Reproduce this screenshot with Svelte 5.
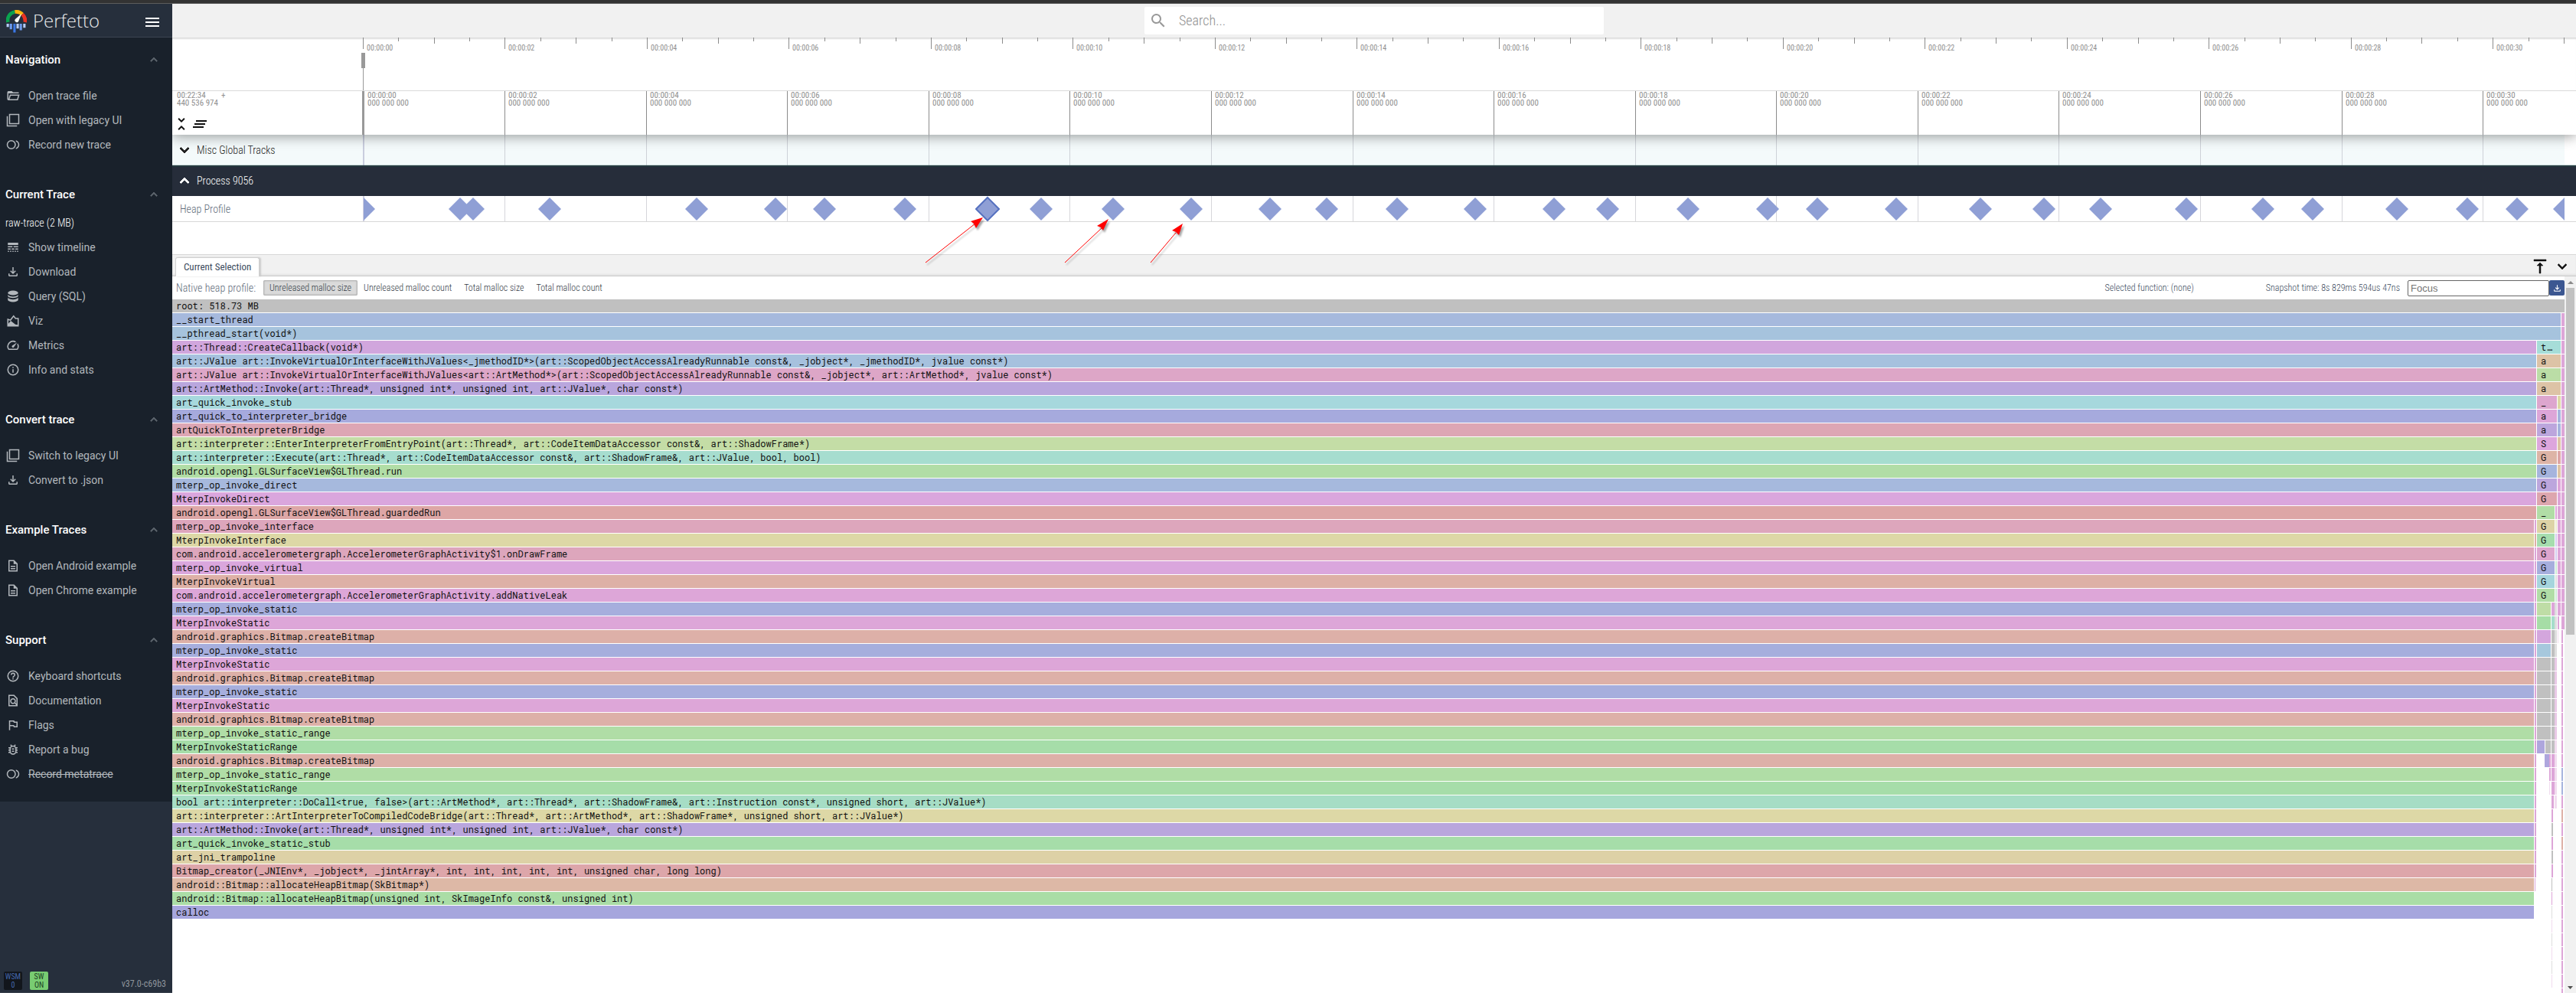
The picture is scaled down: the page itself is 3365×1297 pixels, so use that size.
<script>
  const icons = {
    folder: 'M4 20q-.825 0-1.412-.587T2 18V6q0-.825.588-1.412T4 4h6l2 2h10v2H4v10l2.4-8h17.1L20.5 20H4Zm2.1-2H19l1.8-6H7.9l-1.8 6Z',
    copies: 'M3 5H1v18h18v-2H3V5zM23 1H5v18h18V1zm-2 16H7V3h14v14z',
    record: 'M17 4.3v2.1c2.3.8 4 3 4 5.6s-1.7 4.800-4 5.600v2.100c3.400-.9 6-4 6-7.700s-2.600-6.800-6-7.700zM9 4a8 8 0 1 0 0 16a8 8 0 0 0 0-16zm0 14a6 6 0 1 1 0-12a6 6 0 0 1 0 12z',
    lines: 'M3 16h5v-2H3v2zm6.500 0h5v-2h-5v2zm6.500 0h5v-2h-5v2zM3 20h2v-2H3v2zm4 0h2v-2H7v2zm4 0h2v-2h-2v2zm4 0h2v-2h-2v2zm4 0h2v-2h-2v2zM3 12h8v-2H3v2zm10 0h8v-2h-8v2zM3 4v4h18V4H3z',
    download: 'M18 15v3H6v-3H4v3c0 1.100.9 2 2 2h12c1.100 0 2-.9 2-2v-3h-2zm-1-4-1.410-1.410L13 12.170V4h-2v8.170L8.410 9.590 7 11l5 5 5-5z',
    database: 'M12 10q3.750 0 6.375-1.175T21 6q0-1.650-2.625-2.825T12 2Q8.250 2 5.625 3.175T3 6q0 1.650 2.625 2.825T12 10Zm0 5q1.025 0 2.563-.213t2.962-.687q1.425-.475 2.450-1.237T21 11V8.500q0 1.100-1.025 1.863t-2.450 1.237q-1.425.475-2.962.688T12 12.500q-1.025 0-2.562-.213t-2.963-.687Q5.050 11.125 4.025 10.363T3 8.500V11q0 1.100 1.025 1.863t2.450 1.237q1.425.475 2.963.688T12 15Zm0 7q3.750 0 6.375-1.175T21 18v-4.500q0 1.100-1.025 1.863t-2.450 1.237q-1.425.475-2.962.688T12 17.500q-1.025 0-2.562-.213t-2.963-.687q-1.425-.475-2.450-1.237T3 13.500V18q0 1.650 2.625 2.825T12 22Z',
    chart: 'M2 8l5 1.500L13 2l4 5h5v15H2V8zm2 3v6l4-5 8 6.200 4 .8V9h-4l-3-3.800L8 12l-4-1z',
    speed: 'M20.380 8.570l-1.230 1.850a8 8 0 0 1-.22 7.580H5.070A8 8 0 0 1 15.580 6.850l1.850-1.230A10 10 0 0 0 3.350 19a2 2 0 0 0 1.720 1h13.850a2 2 0 0 0 1.740-1 10 10 0 0 0-.27-10.440zM10.590 15.410a2 2 0 0 0 2.830 0l5.660-8.490-8.490 5.660a2 2 0 0 0 0 2.830z',
    info: 'M11 7h2v2h-2zm0 4h2v6h-2zm1-9a10 10 0 1 0 0 20a10 10 0 0 0 0-20zm0 18a8 8 0 1 1 0-16a8 8 0 0 1 0 16z',
    doc: 'M8 16h8v2H8zm0-4h8v2H8zm6-10H4v20h16V8l-6-6zm4 18H6V4h7v5h5v11z',
    help: 'M11 18h2v-2h-2v2zm1-16a10 10 0 1 0 0 20a10 10 0 0 0 0-20zm0 18a8 8 0 1 1 0-16a8 8 0 0 1 0 16zm0-14a4 4 0 0 0-4 4h2a2 2 0 0 1 4 0c0 2-3 1.750-3 5h2c0-2.250 3-2.500 3-5a4 4 0 0 0-4-4z',
    find: 'M14 2H4v20h16V8l-6-6zM6 4h7l5 5v8.580l-1.840-1.840a5 5 0 1 0-1.420 1.420L17.600 20H6V4zm6 12a3 3 0 1 1 0-6a3 3 0 0 1 0 6z',
    flag: 'M12.360 6l1 2H18v6h-3.360l-1-2H7V6h5.360M14 4H5v17h2v-7h5.400l1 2H20V6h-5l-1-2z',
    bug: 'M20 8h-2.810c-.45-.78-1.070-1.450-1.820-1.960L17 4.410 15.590 3l-2.170 2.170a6 6 0 0 0-2.830 0L8.410 3 7 4.410l1.620 1.630C7.880 6.550 7.260 7.220 6.810 8H4v2h2.090c-.05.33-.09.66-.09 1v1H4v2h2v1c0 .34.04.67.09 1H4v2h2.810a6 6 0 0 0 10.380 0H20v-2h-2.090c.05-.33.09-.66.09-1v-1h2v-2h-2v-1c0-.34-.04-.67-.09-1H20V8zm-4 7a4 4 0 0 1-8 0v-4a4 4 0 0 1 8 0v4zm-6-1h4v2h-4v-2zm0-4h4v2h-4v-2z',
    up: 'M12 8l-6 6 1.410 1.410L12 10.830l4.590 4.580L18 14z',
    down: 'M16.590 8.590L12 13.170 7.410 8.590 6 10l6 6 6-6z',
    collapse: 'M7.410 18.590L8.830 20 12 16.830 15.170 20l1.410-1.410L12 14l-4.590 4.590zm9.180-13.180L15.170 4 12 7.170 8.830 4 7.410 5.410 12 10l4.590-4.590z',
    clear: 'M5 13h14v-2H5v2zm-2 4h14v-2H3v2zM7 7v2h14V7H7z',
    search: 'M15.500 14h-.79l-.28-.27A6.500 6.500 0 1 0 13.730 14.430l.27.28v.79l5 4.990L20.490 19l-4.990-5zm-6 0a4.500 4.500 0 1 1 0-9a4.500 4.500 0 0 1 0 9z',
    top: 'M8 11h3v10h2V11h3l-4-4-4 4zM4 3v2h16V3H4z'
  };

  const sections = [
    { title: 'Navigation', items: [['folder', 'Open trace file'], ['copies', 'Open with legacy UI'], ['record', 'Record new trace']] },
    { title: 'Current Trace', note: 'raw-trace (2 MB)', items: [['lines', 'Show timeline'], ['download', 'Download'], ['database', 'Query (SQL)'], ['chart', 'Viz'], ['speed', 'Metrics'], ['info', 'Info and stats']] },
    { title: 'Convert trace', items: [['copies', 'Switch to legacy UI'], ['download', 'Convert to .json']] },
    { title: 'Example Traces', items: [['doc', 'Open Android example'], ['doc', 'Open Chrome example']] },
    { title: 'Support', items: [['help', 'Keyboard shortcuts'], ['find', 'Documentation'], ['flag', 'Flags'], ['bug', 'Report a bug'], ['record', 'Record metatrace', true]] }
  ];

  // Time axis: the visible canvas is 2875 units wide.
  const axis = 2875;
  const pct = (v) => (v / axis) * 100 + '%';
  const stamp = (i) => '00:00:' + String(i * 2).padStart(2, '0');
  const marks = Array.from({ length: 16 }, (_, i) => ({ label: stamp(i), at: Math.floor(i * 184.58) }));
  const overview = Array.from({ length: 63 }, (_, i) => ({
    at: Math.round(i * 46.37) - 1,
    kind: i % 4 === 0 ? 'major' : i % 2 === 0 ? 'mid' : 'minor',
    label: i % 4 === 0 ? stamp(i / 4) : ''
  }));

  const samples = [0, 126, 143, 243, 435, 538, 602, 707, 815, 885, 979, 1081, 1184, 1258, 1350, 1452, 1555, 1625, 1730, 1834, 1899, 2002, 2112, 2195, 2269, 2381, 2481, 2546, 2656, 2748, 2813, 2875];
  const selected = 815;
  const arrows = [
    { line: [734, 87, 799, 36], head: '809,28 793,33 797,36 800,42' },
    { line: [916, 87, 964, 42], head: '973,30 958,39 963,41 966,45' },
    { line: [1028, 87, 1061, 48], head: '1070,36 1056,45 1061,47 1065,51' }
  ];

  const metrics = ['Unreleased malloc size', 'Unreleased malloc count', 'Total malloc size', 'Total malloc count'];

  const pink = '#dda6d8', grey = '#c0c0c0', fade = '#f1dcef', mist = '#dedede';
  const stat = [['mterp_op_invoke_static', '#a6aedd'], ['MterpInvokeStatic', '#dda6d8'], ['android.graphics.Bitmap.createBitmap', '#ddb0a8']];
  const range = [['mterp_op_invoke_static_range', '#b0dda6'], ['MterpInvokeStaticRange', '#a6dda9']];
  const main = [
    ['root: 518.73 MB', grey],
    ['__start_thread', '#a6b9dd'],
    ['__pthread_start(void*)', '#a6c3dd'],
    ['art::Thread::CreateCallback(void*)', '#d1a6dd'],
    ['art::JValue art::InvokeVirtualOrInterfaceWithJValues<_jmethodID*>(art::ScopedObjectAccessAlreadyRunnable const&, _jobject*, _jmethodID*, jvalue const*)', '#a6c1de'],
    ['art::JValue art::InvokeVirtualOrInterfaceWithJValues<art::ArtMethod*>(art::ScopedObjectAccessAlreadyRunnable const&, _jobject*, art::ArtMethod*, jvalue const*)', '#dda6c7'],
    ['art::ArtMethod::Invoke(art::Thread*, unsigned int*, unsigned int, art::JValue*, char const*)', '#b9a6dd'],
    ['art_quick_invoke_stub', '#a6d8dd'],
    ['art_quick_to_interpreter_bridge', '#a6aadd'],
    ['artQuickToInterpreterBridge', '#dda6b4'],
    ['art::interpreter::EnterInterpreterFromEntryPoint(art::Thread*, art::CodeItemDataAccessor const&, art::ShadowFrame*)', '#c4dda6'],
    ['art::interpreter::Execute(art::Thread*, art::CodeItemDataAccessor const&, art::ShadowFrame&, art::JValue, bool, bool)', '#a6ddcf'],
    ['android.opengl.GLSurfaceView$GLThread.run', '#b1dda6'],
    ['mterp_op_invoke_direct', '#a6b9dd'],
    ['MterpInvokeDirect', '#daa6dd'],
    ['android.opengl.GLSurfaceView$GLThread.guardedRun', '#dda6a6'],
    ['mterp_op_invoke_interface', '#dda6bc'],
    ['MterpInvokeInterface', '#ddd8a6'],
    ['com.android.accelerometergraph.AccelerometerGraphActivity$1.onDrawFrame', '#dda6bc'],
    ['mterp_op_invoke_virtual', '#daa6dd'],
    ['MterpInvokeVirtual', '#ddb0a6'],
    ['com.android.accelerometergraph.AccelerometerGraphActivity.addNativeLeak', '#dda6d8'],
    ...stat, ...stat, ...stat, ...range, stat[2], ...range,
    ['bool art::interpreter::DoCall<true, false>(art::ArtMethod*, art::Thread*, art::ShadowFrame&, art::Instruction const*, unsigned short, art::JValue*)', '#a6ddc5'],
    ['art::interpreter::ArtInterpreterToCompiledCodeBridge(art::Thread*, art::ArtMethod*, art::ShadowFrame*, unsigned short, art::JValue*)', '#ddd8a6'],
    ['art::ArtMethod::Invoke(art::Thread*, unsigned int*, unsigned int, art::JValue*, char const*)', '#b9a6dd'],
    ['art_quick_invoke_static_stub', '#a6dda9'],
    ['art_jni_trampoline', '#ddd1a6'],
    ['Bitmap_creator(_JNIEnv*, _jobject*, _jintArray*, int, int, int, int, int, unsigned char, long long)', '#dda6aa'],
    ['android::Bitmap::allocateHeapBitmap(SkBitmap*)', '#ddb8a6'],
    ['android::Bitmap::allocateHeapBitmap(unsigned int, SkImageInfo const&, unsigned int)', '#aadda6'],
    ['calloc', '#a6a6dd']
  ];
  const side = [
    ['t…', '#a6ddd8'], ['a', '#ddc3a6'], ['a', '#bbdda6'], ['a', '#ddc3a6'], ['_', '#dda6ce'], ['a', pink], ['a', '#bca6dd'],
    ['S', '#dda6dd'], ['G', '#ddb4a6'], ['G', '#a6b4dd'], ['G', '#bca6dd'], ['G', '#dda6ae'], ['_', '#b1dda6'], ['G', '#ddd3a6'],
    ['G', '#a6ddae'], ['G', '#dda6ce'], ['G', '#a6aedd'], ['G', '#a6d5dd'], ['G', '#b1dda6'],
    ['', '#bfdda6'], ['', '#a6dda6'], ['', '#d4a6dd'], ['', '#a6c8dd']
  ];
  const third = ['#ddd8a6', '#a6b4dd', '#a6b4dd', '#ddc3a6', '#dda6a6', '#ddc3a6'];
  const thin = [pink, '#ecebcf', '#d5cdf0', '#d5cdf0', '#cdebd5', mist, '#cdebd5'];

  // Cells are [start, end, colour, label] on a 3125-unit wide graph.
  const total = 3125;
  function cells(r) {
    const out = [];
    const add = (s, e, c, t = '') => out.push([s, e, c, t]);
    if (r === 0) { add(0, total, main[0][1], main[0][0]); return out; }
    if (main[r]) add(0, r < 3 ? 3120 : r < 16 ? 3088 : 3085, main[r][1], main[r][0]);
    if (r >= 16 && r <= 42) add(3086, r === 42 ? 3087 : 3088, r === 17 ? '#ddb0a6' : pink);
    if (r >= 3 && r <= 25) add(3089, r < 7 ? 3120 : r < 15 ? 3115 : r < 22 ? 3112 : 3107, side[r - 3][1], side[r - 3][0]);
    if (r >= 15 && r <= 21) add(3113, 3115, thin[r - 15]);
    if (r >= 26 && r <= 31) add(3089, 3107, grey);
    if (r === 32) { add(3089, 3099, '#aea6dd'); add(3100, 3107, grey); }
    if (r === 33) { add(3099, 3105, '#aea6dd'); add(3105, 3107, pink); }
    if (r === 34) add(3105, 3107, pink);
    if (r === 35) add(3105, 3106, fade);
    if (r >= 22 && r <= 36) {
      add(3108, r === 36 ? 3111 : 3112, r === 22 ? pink : r === 23 ? '#a6ddcb' : r < 33 ? grey : pink);
      add(3112, 3115, r < 26 ? mist : r < 32 ? '#e9c9e6' : fade);
    }
    if (r >= 37 && r <= 43) add(3108, r < 42 ? 3110 : 3109, r % 2 ? pink : grey);
    if (r >= 44 && r <= 49) add(3108, 3109, r % 2 ? fade : mist);
    if (r >= 7 && r <= 24) add(3116, r < 23 ? 3120 : r === 23 ? 3118 : 3117, r < 13 ? third[r - 7] : r === 24 ? fade : pink);
    add(3121, r < 24 ? 3125 : 3123, r === 34 || r === 35 ? '#a6b4dd' : r === 37 || r === 39 ? '#ddb0a6' : pink);
    return out;
  }
  const rows = Array.from({ length: 51 }, (_, r) => {
    let prev = 0;
    return cells(r).map(([s, e, c, t]) => {
      const cell = { gap: ((s - prev) / total) * 100, width: ((e - s) / total) * 100, c, t };
      prev = e;
      return cell;
    });
  });
</script>

{#snippet icon(name)}
  <svg class="icon" viewBox="0 0 24 24" aria-hidden="true"><path d={icons[name]} /></svg>
{/snippet}

{#snippet grid()}
  {#each marks as m}<i class="grid" class:origin={m.at === 0} style:left={pct(m.at)}></i>{/each}
{/snippet}

<div class="app">
  <div class="frame"></div>
  <div class="body">
    <aside>
      <header>
        <svg class="logo" viewBox="0 0 26 29" aria-hidden="true">
          <path d="M2.200 15.500A10.800 10.800 0 0 1 11 2.400" fill="none" stroke="#0aa34f" stroke-width="4.500" />
          <path d="M11 2.400A10.800 10.800 0 0 1 20.500 5.500" fill="none" stroke="#fbb70c" stroke-width="4.500" />
          <path d="M20.500 5.500A10.800 10.800 0 0 1 23.800 15.500" fill="none" stroke="#ea3323" stroke-width="4.500" />
          <path d="M19.500 4.500L15.500 14.500A2.500 2.500 0 0 1 11.500 11.500Z" fill="#fff" />
          <g stroke-width="3"><path d="M2 17.500v4M14.500 17.500v6M23 17.500v5" stroke="#b5cbf5" /><path d="M6 17.500v7M18.500 17.500v8" stroke="#6f9bee" /><path d="M10.500 17.500v11" stroke="#3b78e7" /></g>
        </svg>
        <span class="brand">Perfetto</span>
        <button class="menu" aria-label="Menu"><svg viewBox="0 0 18 12" aria-hidden="true"><path d="M0 0h18v2H0zM0 5h18v2H0zM0 10h18v2H0z" /></svg></button>
      </header>
      <nav>
        {#each sections as s}
          <section>
            <button class="title"><span>{s.title}</span>{@render icon('up')}</button>
            {#if s.note}<p class="note">{s.note}</p>{/if}
            <ul>
              {#each s.items as [ic, label, off]}
                <li><a href="#{label}">{@render icon(ic)}<span class:off>{label}</span></a></li>
              {/each}
            </ul>
          </section>
        {/each}
      </nav>
      <footer>
        <div class="badge wsm">WSM<br />0</div>
        <div class="badge sw">SW<br />ON</div>
        <a class="version" href="#version">v37.0-c69b3</a>
      </footer>
    </aside>

    <main>
      <div class="topbar">
        <label class="search">{@render icon('search')}<input type="text" placeholder="Search..." aria-label="Search" /></label>
      </div>

      <div class="overview">
        <div class="canvas">
          {#each overview as t}
            <i class="tick {t.kind}" style:left={pct(t.at)}></i>
            {#if t.label}<span class="time" style:left={pct(t.at)}>{t.label}</span>{/if}
          {/each}
          <i class="handle"></i>
        </div>
      </div>

      <div class="axis">
        <div class="shell">
          <div class="offset"><span>00:22:34<br />440 536 974</span><span>+</span></div>
          <div class="tools">
            <button aria-label="Collapse all">{@render icon('collapse')}</button>
            <button aria-label="Clear pinned">{@render icon('clear')}</button>
          </div>
        </div>
        <div class="canvas">
          {#each marks as m}
            <i class="mark" class:origin={m.at === 0} style:left={pct(m.at)}></i>
            <span class="time" style:left={pct(m.at)}>{m.label}<br />000 000 000</span>
          {/each}
        </div>
      </div>

      <div class="tracks">
        <div class="group">
          <button class="shell">{@render icon('down')}<span>Misc Global Tracks</span></button>
          <div class="canvas">{@render grid()}</div>
        </div>
        <div class="group open">
          <button class="shell">{@render icon('up')}<span>Process 9056</span></button>
        </div>
        <div class="track">
          <div class="shell">Heap Profile</div>
          <div class="canvas">
            {@render grid()}
            <div class="samples">
              {#each samples as at}
                <svg class="sample" class:selected={at === selected} style:left={pct(at)} viewBox="-16 -17 32 34"><path d="M0-15L15 0L0 15L-15 0Z" /></svg>
              {/each}
            </div>
            <svg class="arrows" viewBox="0 0 1200 100" aria-hidden="true">
              {#each arrows as a}
                <line x1={a.line[0]} y1={a.line[1]} x2={a.line[2]} y2={a.line[3]} />
                <polygon points={a.head} />
              {/each}
            </svg>
          </div>
        </div>
      </div>

      <div class="tabs">
        <button class="tab">Current Selection</button>
        <button class="act" aria-label="Expand panel">{@render icon('top')}</button>
        <button class="act" aria-label="Collapse panel">{@render icon('down')}</button>
      </div>

      <div class="details">
        <div class="content">
          <div class="bar">
            <span class="heading">Native heap profile:</span>
            <div class="metrics">
              {#each metrics as m, i}<button class:chosen={i === 0}>{m}</button>{/each}
            </div>
            <span class="fn">Selected function: (none)</span>
            <span>Snapshot time: 8s 829ms 594us 47ns</span>
            <input type="text" placeholder="Focus" aria-label="Focus" />
            <button class="save" aria-label="Download profile">{@render icon('download')}</button>
          </div>
          <div class="flame">
            {#each rows as row}
              <div class="row">
                {#each row as c}
                  <span class="cell" style:margin-left="{c.gap}%" style:width="{c.width}%" style:background={c.c} class:text={c.t}>{c.t}</span>
                {/each}
              </div>
            {/each}
          </div>
        </div>
        <div class="scroll" aria-hidden="true">
          <svg viewBox="0 0 15 15"><path d="M4 10l4-4 4 4z" fill="#8a8a8a" /></svg>
          <div class="rail"><div class="thumb"></div></div>
          <svg viewBox="0 0 15 15"><path d="M4 6h7l-3.500 4z" fill="#505050" /></svg>
        </div>
      </div>
    </main>
  </div>
</div>

<style>
  :global(body) { margin: 0; background: #fff; }
  .app { --cond: 'Roboto Condensed', Roboto, sans-serif; display: flex; flex-direction: column; height: 100vh; overflow: hidden; font-family: Roboto, sans-serif; font-size: 14px; }
  .app * { box-sizing: border-box; }
  button { font: inherit; color: inherit; background: none; border: 0; padding: 0; margin: 0; text-align: left; }
  .icon { width: 18px; height: 18px; fill: currentColor; flex: none; display: block; }
  .frame { flex: none; height: 5px; background: #333; border-bottom: 1px solid #5c5c5c; }
  .body { flex: 1; min-height: 0; display: flex; }

  aside { width: 225px; flex: none; display: flex; flex-direction: column; background: #262f3c; color: #b3b8bd; border-bottom: 1px solid #3b434e; }
  header { height: 44px; flex: none; display: flex; align-items: center; padding: 0 17px 0 8px; border-bottom: 1px solid #3c4552; }
  .logo { width: 27px; height: 30px; margin-right: 8px; margin-top: 2px; }
  .brand { flex: 1; font-family: 'Open Sans', Roboto, sans-serif; font-weight: 300; font-size: 24px; line-height: 32px; color: #e6e8ea; }
  .menu svg { display: block; width: 18px; height: 12px; fill: #fff; margin-top: 5px; }
  section { background: #19212b; padding-bottom: 20px; }
  .title { width: 100%; height: 60px; padding: 0 15px 2px 7px; display: flex; align-items: center; justify-content: space-between; font-size: 15px; font-weight: 500; color: #fff; }
  .title .icon { color: #5c646c; stroke: currentColor; }
  .note { margin: 0; padding-left: 7px; height: 22px; line-height: 12px; font-family: var(--cond); font-weight: 300; color: #fff; }
  ul { list-style: none; margin: 0; padding: 0; }
  a { color: inherit; text-decoration: none; }
  li a { display: flex; align-items: center; gap: 11px; height: 32px; padding-left: 8px; }
  .off { text-decoration: line-through; }
  footer { margin-top: auto; display: flex; align-items: center; padding: 0 8px 3px 5px; gap: 10px; }
  .badge { width: 24px; height: 24px; border-radius: 2px; font: 10px/11px var(--cond); text-align: center; padding-top: 1px; }
  .wsm { background: #12161c; color: #4468ae; }
  .sw { background: #78cc72; color: #1c4023; }
  .version { margin-left: auto; padding-top: 8px; font: 12px/16px var(--cond); color: #8e949b; }

  main { flex: 1; min-width: 0; display: flex; flex-direction: column; background: #fff; }
  .topbar { height: 44px; flex: none; background: #f1f1f1; padding: 4px 0; }
  .search { margin: 0 auto; width: 600px; height: 36px; background: #fff; border-radius: 2px; display: flex; align-items: center; gap: 15px; padding: 0 6px; color: #999; }
  .search .icon { width: 24px; height: 24px; }
  .search input { flex: 1; border: 0; outline: 0; background: none; padding: 0; font: 300 18px/24px var(--cond); color: #555; }
  .search input::placeholder { color: #909090; }

  .canvas { position: relative; flex: 1; margin-right: 15px; }
  .overview { display: flex; height: 70px; flex: none; padding-left: 250px; border-bottom: 1px solid #dadada; box-shadow: inset 0 3px 2px -1px #ddd; }
  .tick { position: absolute; top: 0; width: 1px; background: #8c8c8c; }
  .minor { height: 5px; }
  .mid { height: 8px; }
  .major { height: 15px; }
  .time { position: absolute; white-space: nowrap; color: #909090; font-family: var(--cond); margin-left: 5px; }
  .overview .time { top: 8px; font-size: 10px; line-height: 12px; }
  .handle { position: absolute; left: -1px; top: 20px; width: 1px; height: 49px; background: #999; }
  .handle::before { content: ''; position: absolute; left: -2px; top: 0; width: 5px; height: 20px; background: #999; }

  .axis { display: flex; height: 57px; flex: none; position: relative; z-index: 1; background: #fff; box-shadow: 0 2px 16px 0 rgba(0, 0, 0, .4); clip-path: inset(0 0 -40px 0); }
  .shell { width: 250px; flex: none; }
  .axis .shell { display: flex; flex-direction: column; justify-content: space-between; padding: 1px 6px 2px; }
  .offset { display: flex; gap: 4px; color: #909090; }
  .offset, .axis .time { font: 11px/10px var(--cond); }
  .axis .time { top: 1px; }
  .tools { display: flex; margin-left: -6px; }
  .tools .icon { width: 24px; height: 24px; color: #111; }
  .mark { position: absolute; top: 0; bottom: 0; width: 1px; background: #8c8c8c; }
  .mark.origin { margin-left: -2px; width: 3px; background: #999; }

  .tracks { flex: none; height: 157px; border-bottom: 1px solid #d8d8d8; font-family: var(--cond); font-weight: 300; }
  .group { display: flex; height: 40px; color: #222; background: linear-gradient(#f4fafb, #f4fafb) no-repeat; background-size: calc(100% - 15px) 100%; box-shadow: inset 0 -1px #cbdbda; }
  .group .shell { display: flex; align-items: center; gap: 4px; padding-left: 4px; }
  .group .icon { width: 24px; height: 24px; stroke: currentColor; }
  .group.open { background: #262d3a; color: #fff; box-shadow: inset 0 2px #263a40; }
  .grid { position: absolute; top: 0; bottom: 0; width: 1px; background: rgba(120, 120, 135, .3); }
  .grid.origin { width: 2px; margin-left: -1px; background: rgba(120, 120, 170, .35); }
  .track { display: flex; height: 34px; border-bottom: 1px solid #d8d8d8; }
  .track .shell { padding-left: 10px; line-height: 34px; color: #5f6b7a; }
  .samples { position: absolute; inset: 0; overflow: hidden; }
  .sample { position: absolute; top: 0; width: 32px; height: 34px; margin-left: -16px; fill: #8f9fd5; }
  .sample.selected { stroke: #5672c0; stroke-width: 2; }
  .arrows { position: absolute; left: 0; top: 0; width: 1200px; height: 100px; z-index: 2; filter: drop-shadow(2px 3px 1px rgba(0, 0, 0, .35)); }
  .arrows line { stroke: #f00; stroke-width: 1; }
  .arrows polygon { fill: #f00; }

  .tabs { flex: none; height: 28px; display: flex; align-items: flex-end; background: #f1f1f1; padding: 0 6px 0 4px; box-shadow: inset 0 -1px #c8c8c8, inset 0 -3px 2px #e4e4e4; gap: 5px; }
  .tab { height: 25px; padding: 0 10px; margin-right: auto; background: #fff; border: 1px solid #d0d0d0; border-bottom: 0; border-radius: 3px 3px 0 0; box-shadow: 2px 0 2px #ccc; font: 13px/20px var(--cond); color: #3c4b5d; }
  .act { height: 27px; color: #111; }
  .act .icon { width: 24px; height: 24px; stroke: currentColor; stroke-width: .5; }

  .details { flex: 1; min-height: 0; display: flex; }
  .content { flex: 1; min-width: 0; overflow: hidden; }
  .bar { display: flex; align-items: center; height: 30px; padding-left: 5px; font: 300 12px/20px var(--cond); color: #3c4b5d; }
  .heading { font-size: 14px; margin-right: 10px; color: #5f6b7a; }
  .metrics { display: flex; flex: 1; }
  .metrics button { height: 20px; padding: 0 8px; color: #333a45; border-radius: 2px; line-height: 18px; }
  .metrics .chosen { background: #dadada; box-shadow: inset 0 0 2px 1px #aaa; }
  .fn { margin-right: 94px; }
  .bar input { width: 185px; height: 21px; margin-left: 10px; padding: 0 3px; border: 1px solid #666; border-radius: 2px; font: 13px/18px 'Liberation Sans', sans-serif; }
  .bar input::placeholder { color: #757575; }
  .save { width: 20px; height: 20px; border-radius: 2px; background: #3c5791; color: #fff; display: flex; align-items: center; justify-content: center; }
  .save .icon { width: 13px; height: 13px; }
  .row { display: flex; height: 17px; margin-bottom: 1px; }
  .cell { flex: none; overflow: hidden; white-space: nowrap; font: 12px/16px 'Roboto Mono', 'Liberation Mono', monospace; color: #111; }
  .cell.text { padding-left: 5px; }

  .scroll { width: 15px; flex: none; background: #f1f1f1; display: flex; flex-direction: column; }
  .scroll svg { width: 15px; height: 15px; flex: none; display: block; }
  .rail { flex: 1; padding: 0 2px; }
  .thumb { height: 50%; background: #c1c1c1; }
</style>
